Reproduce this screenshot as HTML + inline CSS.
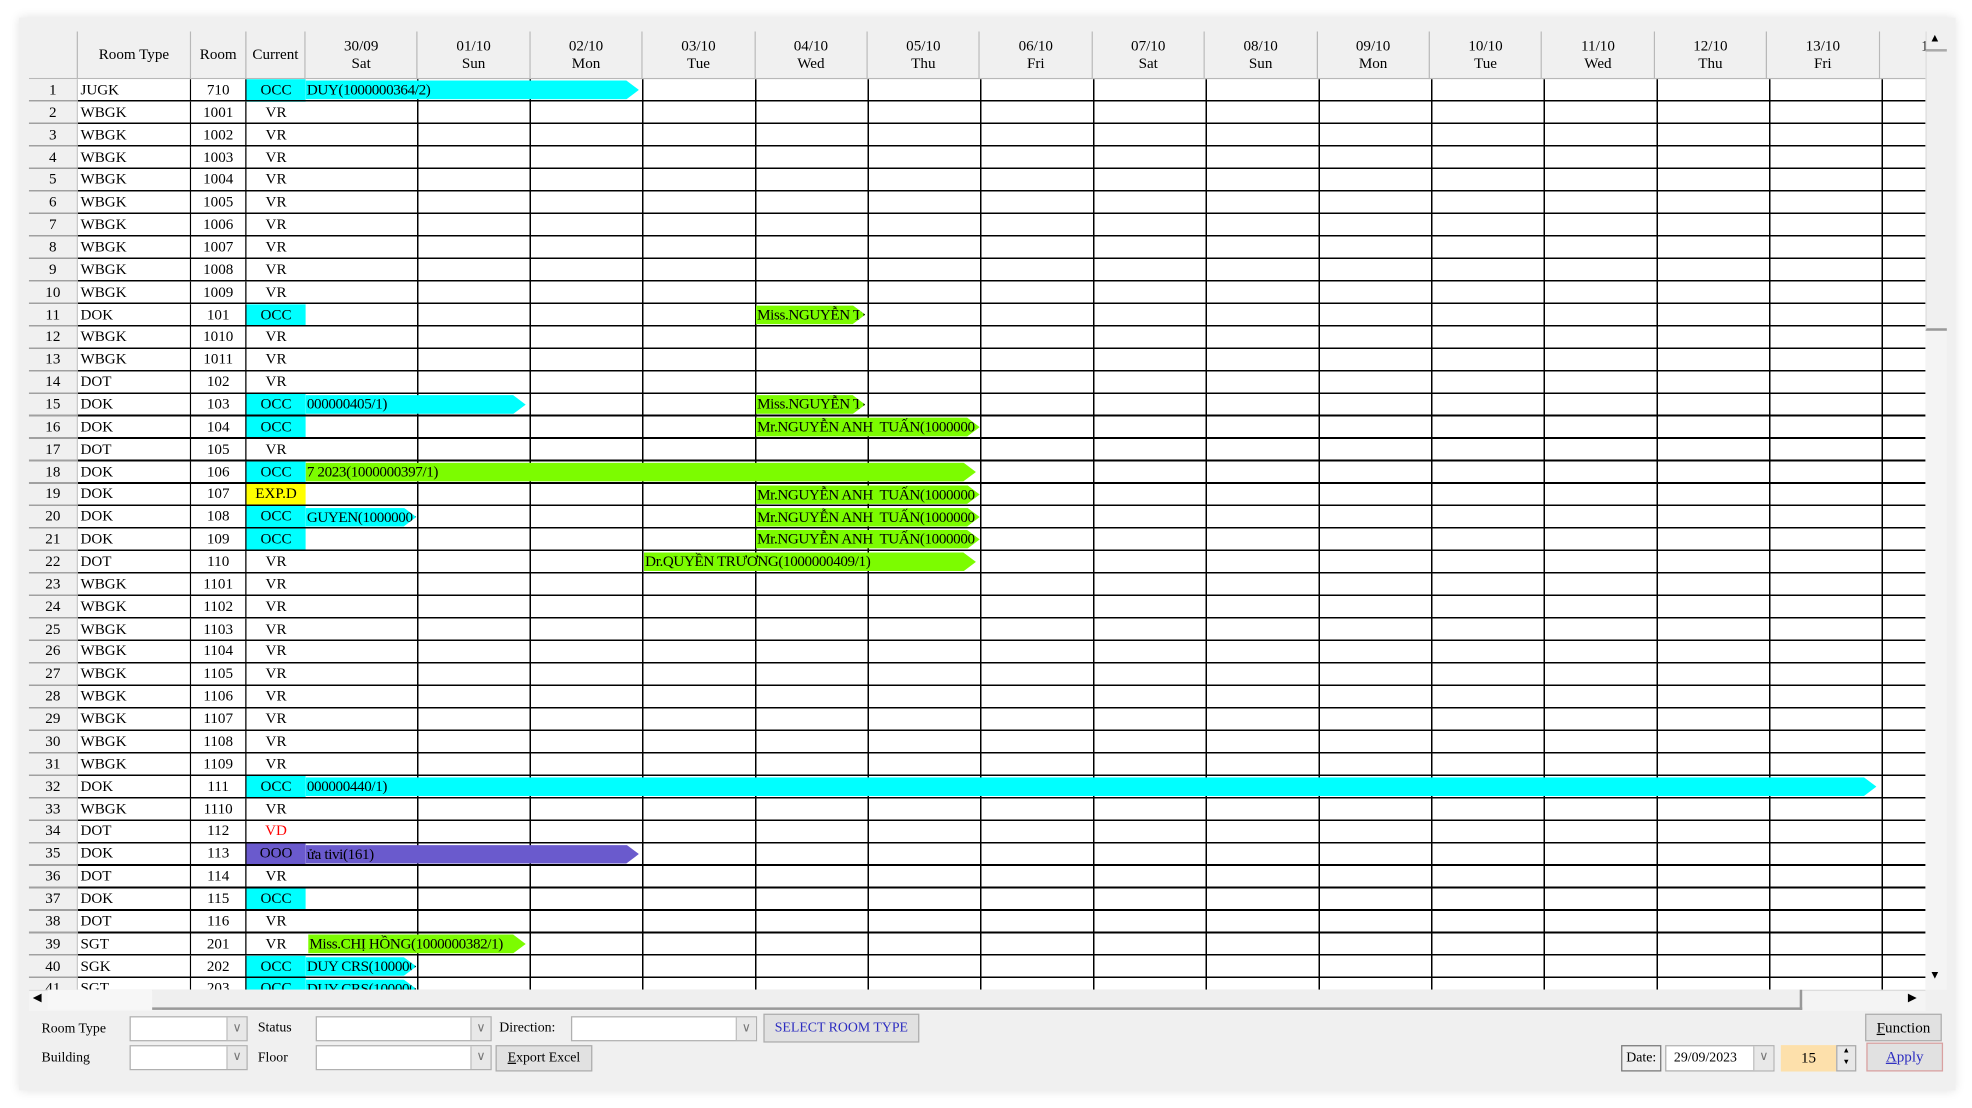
<!DOCTYPE html>
<html><head><meta charset="utf-8"><style>
html,body{margin:0;padding:0;background:#fff;overflow:hidden}
body{width:1972px;height:1108px;position:relative}
#w{position:absolute;left:0;top:0;width:1568px;height:881px;transform:scale(1.25765);transform-origin:0 0;font-family:"Liberation Serif",serif;font-size:12px;color:#000}
.panel{position:absolute;left:15px;top:14px;width:1540px;height:853px;background:#f0f0f0;box-shadow:0 0 8px rgba(0,0,0,.12)}
.a{position:absolute}
.grid{position:absolute;left:23px;top:25px;width:1508px;height:762px;overflow:hidden;background:#f0f0f0}
.hd{position:absolute;top:0;height:38px;box-sizing:border-box;border-right:1px solid #b8b8b8;border-bottom:1px solid #b8b8b8;text-align:center;line-height:14px;background:#f0f0f0}
.body{position:absolute;left:0;top:38px;width:1508px;height:760px}
.r{height:17.87px;position:relative;line-height:17px;white-space:nowrap}
.r span{position:absolute;top:0;bottom:0}
.n{left:0;width:39px;text-align:center;background:#f0f0f0;border-right:1px solid #c8c8c8;box-sizing:border-box}
.t{left:39px;width:90px;padding-left:2px;box-sizing:border-box;background:#fff;border-right:1.3px solid #000}
.m{left:129px;width:44px;text-align:center;background:#fff;border-right:1.3px solid #000;box-sizing:border-box}
.c{left:173px;width:47px;text-align:center;background:#fff}
.o{background:#00ffff!important}.e{background:#ffff00!important}.p{background:#6a5acd!important}.v{color:#f00}
.dl{position:absolute;left:220px;top:38px;width:1288px;height:730px;background:repeating-linear-gradient(to right,transparent 0 88.4px,#000 88.4px 89.6px);pointer-events:none}
.hl{position:absolute;left:0;top:38px;width:1508px;height:730px;background:repeating-linear-gradient(to bottom,transparent 0 16.6px,#000 16.6px 17.87px);pointer-events:none}
.hl2{position:absolute;left:0;top:38px;width:39px;height:730px;background:repeating-linear-gradient(to bottom,transparent 0 16.6px,#a0a0a0 16.6px 17.87px);pointer-events:none}
.b{position:absolute;height:15px;line-height:15px;white-space:nowrap;overflow:hidden;clip-path:polygon(0 0,calc(100% - 10px) 0,100% 50%,calc(100% - 10px) 100%,0 100%);padding-left:1px;box-sizing:border-box;letter-spacing:-0.3px}
.g{background:#7cfc00}.cy{background:#00ffff}.pu{background:#6a5acd}
.cb{position:absolute;background:#fff;border:1px solid #b0b0b0;box-sizing:border-box}
.cb:after{content:"\2228";position:absolute;right:0;top:0;width:15px;height:100%;background:#e8e8e8;border-left:1px solid #c0c0c0;font-size:10px;color:#777;text-align:center;line-height:17px;font-family:"DejaVu Sans",sans-serif}
.btn{position:absolute;background:#e1e1e1;border:1px solid #adadad;box-sizing:border-box;text-align:center;line-height:20px}
.lb{position:absolute;font-size:11px}
</style></head><body><div id="w">
<div class="panel"></div>
<div class="grid">
<div class="hd" style="left:0;width:39px"></div>
<div class="hd" style="left:39px;width:90px;line-height:36px">Room Type</div>
<div class="hd" style="left:129px;width:44px;line-height:36px">Room</div>
<div class="hd" style="left:173px;width:47px;line-height:36px">Current</div>
<div class="hd" style="left:220px;width:89.4px;padding-top:4px">30/09<br>Sat</div>
<div class="hd" style="left:309.4px;width:89.4px;padding-top:4px">01/10<br>Sun</div>
<div class="hd" style="left:398.8px;width:89.4px;padding-top:4px">02/10<br>Mon</div>
<div class="hd" style="left:488.2px;width:89.4px;padding-top:4px">03/10<br>Tue</div>
<div class="hd" style="left:577.6px;width:89.4px;padding-top:4px">04/10<br>Wed</div>
<div class="hd" style="left:667px;width:89.4px;padding-top:4px">05/10<br>Thu</div>
<div class="hd" style="left:756.4px;width:89.4px;padding-top:4px">06/10<br>Fri</div>
<div class="hd" style="left:845.8px;width:89.4px;padding-top:4px">07/10<br>Sat</div>
<div class="hd" style="left:935.2px;width:89.4px;padding-top:4px">08/10<br>Sun</div>
<div class="hd" style="left:1024.6px;width:89.4px;padding-top:4px">09/10<br>Mon</div>
<div class="hd" style="left:1114px;width:89.4px;padding-top:4px">10/10<br>Tue</div>
<div class="hd" style="left:1203.4px;width:89.4px;padding-top:4px">11/10<br>Wed</div>
<div class="hd" style="left:1292.8px;width:89.4px;padding-top:4px">12/10<br>Thu</div>
<div class="hd" style="left:1382.2px;width:89.4px;padding-top:4px">13/10<br>Fri</div>
<div class="hd" style="left:1471.6px;width:40px;text-align:right;padding-top:4px">1</div>
<div class="body" style="background:#fff">
<div class="r"><span class="n">1</span><span class="t">JUGK</span><span class="m">710</span><span class="c o">OCC</span></div>
<div class="r"><span class="n">2</span><span class="t">WBGK</span><span class="m">1001</span><span class="c">VR</span></div>
<div class="r"><span class="n">3</span><span class="t">WBGK</span><span class="m">1002</span><span class="c">VR</span></div>
<div class="r"><span class="n">4</span><span class="t">WBGK</span><span class="m">1003</span><span class="c">VR</span></div>
<div class="r"><span class="n">5</span><span class="t">WBGK</span><span class="m">1004</span><span class="c">VR</span></div>
<div class="r"><span class="n">6</span><span class="t">WBGK</span><span class="m">1005</span><span class="c">VR</span></div>
<div class="r"><span class="n">7</span><span class="t">WBGK</span><span class="m">1006</span><span class="c">VR</span></div>
<div class="r"><span class="n">8</span><span class="t">WBGK</span><span class="m">1007</span><span class="c">VR</span></div>
<div class="r"><span class="n">9</span><span class="t">WBGK</span><span class="m">1008</span><span class="c">VR</span></div>
<div class="r"><span class="n">10</span><span class="t">WBGK</span><span class="m">1009</span><span class="c">VR</span></div>
<div class="r"><span class="n">11</span><span class="t">DOK</span><span class="m">101</span><span class="c o">OCC</span></div>
<div class="r"><span class="n">12</span><span class="t">WBGK</span><span class="m">1010</span><span class="c">VR</span></div>
<div class="r"><span class="n">13</span><span class="t">WBGK</span><span class="m">1011</span><span class="c">VR</span></div>
<div class="r"><span class="n">14</span><span class="t">DOT</span><span class="m">102</span><span class="c">VR</span></div>
<div class="r"><span class="n">15</span><span class="t">DOK</span><span class="m">103</span><span class="c o">OCC</span></div>
<div class="r"><span class="n">16</span><span class="t">DOK</span><span class="m">104</span><span class="c o">OCC</span></div>
<div class="r"><span class="n">17</span><span class="t">DOT</span><span class="m">105</span><span class="c">VR</span></div>
<div class="r"><span class="n">18</span><span class="t">DOK</span><span class="m">106</span><span class="c o">OCC</span></div>
<div class="r"><span class="n">19</span><span class="t">DOK</span><span class="m">107</span><span class="c e">EXP.D</span></div>
<div class="r"><span class="n">20</span><span class="t">DOK</span><span class="m">108</span><span class="c o">OCC</span></div>
<div class="r"><span class="n">21</span><span class="t">DOK</span><span class="m">109</span><span class="c o">OCC</span></div>
<div class="r"><span class="n">22</span><span class="t">DOT</span><span class="m">110</span><span class="c">VR</span></div>
<div class="r"><span class="n">23</span><span class="t">WBGK</span><span class="m">1101</span><span class="c">VR</span></div>
<div class="r"><span class="n">24</span><span class="t">WBGK</span><span class="m">1102</span><span class="c">VR</span></div>
<div class="r"><span class="n">25</span><span class="t">WBGK</span><span class="m">1103</span><span class="c">VR</span></div>
<div class="r"><span class="n">26</span><span class="t">WBGK</span><span class="m">1104</span><span class="c">VR</span></div>
<div class="r"><span class="n">27</span><span class="t">WBGK</span><span class="m">1105</span><span class="c">VR</span></div>
<div class="r"><span class="n">28</span><span class="t">WBGK</span><span class="m">1106</span><span class="c">VR</span></div>
<div class="r"><span class="n">29</span><span class="t">WBGK</span><span class="m">1107</span><span class="c">VR</span></div>
<div class="r"><span class="n">30</span><span class="t">WBGK</span><span class="m">1108</span><span class="c">VR</span></div>
<div class="r"><span class="n">31</span><span class="t">WBGK</span><span class="m">1109</span><span class="c">VR</span></div>
<div class="r"><span class="n">32</span><span class="t">DOK</span><span class="m">111</span><span class="c o">OCC</span></div>
<div class="r"><span class="n">33</span><span class="t">WBGK</span><span class="m">1110</span><span class="c">VR</span></div>
<div class="r"><span class="n">34</span><span class="t">DOT</span><span class="m">112</span><span class="c v">VD</span></div>
<div class="r"><span class="n">35</span><span class="t">DOK</span><span class="m">113</span><span class="c p">OOO</span></div>
<div class="r"><span class="n">36</span><span class="t">DOT</span><span class="m">114</span><span class="c">VR</span></div>
<div class="r"><span class="n">37</span><span class="t">DOK</span><span class="m">115</span><span class="c o">OCC</span></div>
<div class="r"><span class="n">38</span><span class="t">DOT</span><span class="m">116</span><span class="c">VR</span></div>
<div class="r"><span class="n">39</span><span class="t">SGT</span><span class="m">201</span><span class="c">VR</span></div>
<div class="r"><span class="n">40</span><span class="t">SGK</span><span class="m">202</span><span class="c o">OCC</span></div>
<div class="r"><span class="n">41</span><span class="t">SGT</span><span class="m">203</span><span class="c o">OCC</span></div>
</div>
<div class="dl"></div>
<div class="hl"></div>
<div class="hl2"></div>
<div class="b cy" style="left:220px;top:39px;width:265px">DUY(1000000364/2)</div>
<div class="b g" style="left:578px;top:217.7px;width:87px">Miss.NGUYỄN THỊ</div>
<div class="b cy" style="left:220px;top:289.2px;width:175px">000000405/1)</div>
<div class="b g" style="left:578px;top:289.2px;width:87px">Miss.NGUYỄN THỊ</div>
<div class="b g" style="left:578px;top:307.1px;width:178px">Mr.NGUYỄN ANH&nbsp; TUẤN(1000000</div>
<div class="b g" style="left:220px;top:342.8px;width:533px">7 2023(1000000397/1)</div>
<div class="b g" style="left:578px;top:360.7px;width:178px">Mr.NGUYỄN ANH&nbsp; TUẤN(1000000</div>
<div class="b cy" style="left:220px;top:378.6px;width:88px">GUYEN(1000000388</div>
<div class="b g" style="left:578px;top:378.6px;width:178px">Mr.NGUYỄN ANH&nbsp; TUẤN(1000000</div>
<div class="b g" style="left:578px;top:396.4px;width:178px">Mr.NGUYỄN ANH&nbsp; TUẤN(1000000</div>
<div class="b g" style="left:489px;top:414.3px;width:264px">Dr.QUYỀN TRƯƠNG(1000000409/1)</div>
<div class="b cy" style="left:220px;top:593px;width:1249px">000000440/1)</div>
<div class="b pu" style="left:220px;top:646.6px;width:265px">ửa tivi(161)</div>
<div class="b g" style="left:222px;top:718.1px;width:173px">Miss.CHỊ HỒNG(1000000382/1)</div>
<div class="b cy" style="left:220px;top:736px;width:88px">DUY CRS(1000000</div>
<div class="b cy" style="left:220px;top:753.8px;width:88px">DUY CRS(1000000</div>
</div>
<div class="a" style="left:1531px;top:25px;width:17px;height:762px;background:#f4f4f4"></div>
<div class="a" style="left:1531px;top:25px;width:17px;height:238px;background:#f0f0f0;border-left:1px solid #ddd;border-bottom:2px solid #999;box-sizing:border-box"></div>
<div class="a" style="left:1531px;top:25px;width:17px;height:16px;border-bottom:2px solid #aaa;box-sizing:border-box"></div>
<div class="a" style="left:1534px;top:25px;font-size:9px">▲</div>
<div class="a" style="left:1534px;top:770px;font-size:9px">▼</div>
<div class="a" style="left:23px;top:787px;width:1508px;height:16px;background:#f4f4f4;border-top:1px solid #ddd"></div>
<div class="a" style="left:38px;top:787px;width:83px;height:16px;background:#f7f7f7"></div>
<div class="a" style="left:121px;top:787px;width:1312px;height:16px;background:#efefef;border-right:2px solid #999;border-bottom:2px solid #999;box-sizing:border-box"></div>
<div class="a" style="left:26px;top:788px;font-size:9px">◀</div>
<div class="a" style="left:1517px;top:788px;font-size:9px">▶</div>
<div class="lb" style="left:33px;top:812px">Room Type</div>
<div class="cb" style="left:103px;top:808px;width:94px;height:20px"></div>
<div class="lb" style="left:205px;top:811px">Status</div>
<div class="cb" style="left:251px;top:808px;width:140px;height:20px"></div>
<div class="lb" style="left:397px;top:811px">Direction:</div>
<div class="cb" style="left:454px;top:808px;width:148px;height:20px"></div>
<div class="btn" style="left:607px;top:806px;width:124px;height:23px;color:#2b2bc0;font-size:11px">SELECT ROOM TYPE</div>
<div class="lb" style="left:33px;top:835px">Building</div>
<div class="cb" style="left:103px;top:831px;width:94px;height:20px"></div>
<div class="lb" style="left:205px;top:835px">Floor</div>
<div class="cb" style="left:251px;top:831px;width:140px;height:20px"></div>
<div class="btn" style="left:394px;top:831px;width:77px;height:21px;font-size:11px;line-height:19px"><u>E</u>xport Excel</div>
<div class="btn" style="left:1483px;top:806px;width:61px;height:22px"><u>F</u>unction</div>
<div class="btn" style="left:1484px;top:829px;width:61px;height:23px;color:#2b2bc0;border-color:#d9a0a0"><u>A</u>pply</div>
<div class="a" style="left:1289px;top:831px;width:32px;height:21px;border:1px solid #777;box-sizing:border-box;text-align:center;line-height:19px;font-size:11px;background:#f0f0f0">Date:</div>
<div class="cb" style="left:1324px;top:831px;width:87px;height:21px;padding-left:6px;line-height:19px;font-size:11px">29/09/2023</div>
<div class="a" style="left:1416px;top:831px;width:44px;height:21px;background:#fde0ab;text-align:center;line-height:21px">15</div>
<div class="a" style="left:1460px;top:831px;width:16px;height:21px;background:#e8e8e8;border:1px solid #aaa;box-sizing:border-box;font-size:6px;text-align:center;line-height:9px">▲<br>▼</div>
</div></body></html>
